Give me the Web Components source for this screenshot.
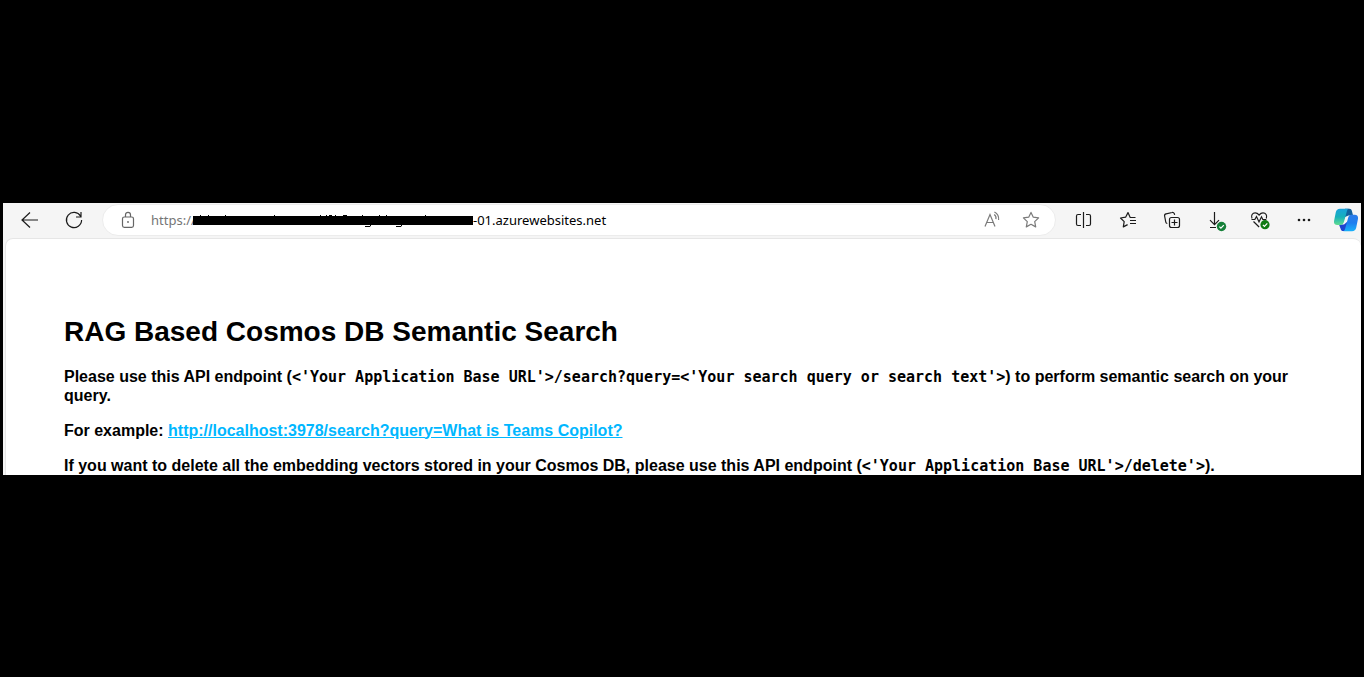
<!DOCTYPE html>
<html lang="en">
<head>
<meta charset="utf-8">
<meta name="viewport" content="width=device-width, initial-scale=1">
<title>RAG Based Cosmos DB Semantic Search</title>
<style>
  body { margin: 0; background: #000; }
</style>
</head>
<body>
<browser-window>
  <browser-toolbar slot="toolbar"></browser-toolbar>
  <search-page></search-page>
</browser-window>

<script>
const icons = {
  back: '<path d="M20 12H4M12 4.5L4 12l8 7.5"/>',
  reload: '<path d="M18.6 8.2A7.6 7.6 0 1 0 19.6 12M19 4v5h-5"/>',
  lock: '<rect x="6.5" y="9" width="11" height="10.3" rx="1.8"/><path d="M9.5 9V6.8a2.5 2.5 0 0 1 5 0V9"/><circle cx="12" cy="14" r=".9" fill="currentColor" stroke="none"/>',
  read: '<path d="M6 18.5L11 6.6l5 11.9M7.6 14.5h6.8M15.2 6.6a4.5 4.5 0 0 1 1.7 4.6M15.400 4a8 8 0 0 1 4.200 8"/>',
  star: '<path d="M12 4.4l2.3 4.8 5.3.7-3.9 3.7 1 5.3-4.7-2.6-4.7 2.6 1-5.3-3.9-3.7 5.3-.7z" stroke-linejoin="round"/>',
  split: '<path d="M11.5 4v16M9 6.5H6A1.5 1.5 0 0 0 4.5 8v8A1.5 1.5 0 0 0 6 17.5h3M14 6.5h3A1.5 1.5 0 0 1 18.5 8v8a1.5 1.5 0 0 1-1.5 1.5h-3"/>',
  favorites: '<path d="M19.5 9.5H14.2L12 4.6 9.6 9.2l-5.100.8 3.700 3.700-.9 5.200 4.300-2.300M14 12.500h6M14 15.500h6" stroke-linejoin="round"/>',
  collections: '<rect x="9.5" y="9.5" width="10" height="10" rx="2"/><path d="M14.5 11.5v6M11.5 14.5h6M7.3 15.5a1.9 1.9 0 0 1-1.5-1.400L4.600 8a1.900 1.900 0 0 1 1.500-2.200l6-1.300a1.900 1.900 0 0 1 2.300 1.400l.2 1"/>',
  download: '<path d="M10.500 4v12.500M6 12.200l4.500 4.500 4.500-4.500M6 19.500h6"/><circle cx="17.500" cy="18.500" r="4.700" fill="#158039" stroke="none"/><path d="M15.400 18.600l1.500 1.500 2.900-3" stroke="#fff"/>',
  health: '<path d="M4 10.500C2.700 7.500 4.500 4.800 7.200 4.800c1.800 0 2.900 1 3.900 2.200 1-1.200 2.100-2.200 3.900-2.200 2.700 0 4.500 2.700 3.300 5.700M3.500 11.500h3.300l1.700-2.900 2.500 5.300 2.500-5.100 1.300 2.700h3.500M5.500 13.500l5.600 5.500"/><circle cx="17" cy="16.700" r="4.600" fill="#0f7b12" stroke="none"/><path d="M14.900 16.800l1.500 1.500 2.900-3" stroke="#fff"/>',
  more: '<g fill="currentColor" stroke="none"><circle cx="7" cy="12" r="1.300"/><circle cx="12" cy="12" r="1.300"/><circle cx="17" cy="12" r="1.300"/></g>',
  copilot: `<defs>
      <linearGradient id="a" x1="0" y1="0" x2="0" y2="1"><stop offset="0" stop-color="#19a2dc"/><stop offset=".5" stop-color="#17b0ba"/><stop offset="1" stop-color="#61dc8f"/></linearGradient>
      <linearGradient id="b" x1="0" y1="0" x2="0" y2="1"><stop offset="0" stop-color="#2b7be9"/><stop offset=".5" stop-color="#1c7eef"/><stop offset="1" stop-color="#18b2fa"/></linearGradient>
    </defs>
    <g stroke="none">
      <path fill="#12609d" d="M11 .8h4.300c1.500 0 2.200.8 2.600 2.200l1.200 4.500h-4.600L11 9z"/>
      <path fill="#1d45d0" d="M5 16.500h5l3.500-3 .3 5.500-2.300 4H9.200c-1.500 0-2.200-.9-2.600-2.300z"/>
      <path fill="url(#a)" d="M6 .800h9c-1.300 0-1.800 1.300-2.200 2.700L10 13.800c-.5 1.900-1.700 3.200-3.500 3.200H3.200C.300 17-.500 14.800.200 12.300L1.800 4.300C2.300 2 3.700.800 6 .800z"/>
      <path fill="url(#b)" d="M18 23.200H9c1.300 0 1.800-1.300 2.200-2.700L14 10.200c.5-1.900 1.700-3.400 3.500-3.400h3.300c2.900 0 3.700 2.400 3 4.900l-1.600 8c-.5 2.300-1.900 3.500-4.200 3.500z"/>
    </g>`
};

class TbIcon extends HTMLElement {
  connectedCallback() {
    this.attachShadow({ mode: 'open' }).innerHTML = `
      <style>
        :host { display: block; width: 24px; height: 24px; flex: none; }
        svg { display: block; width: 100%; height: 100%; }
      </style>
      <svg viewBox="0 0 24 24" fill="none" stroke="currentColor" stroke-width="1.200" aria-hidden="true">${icons[this.getAttribute('name')]}</svg>`;
  }
}
customElements.define('tb-icon', TbIcon);

class TbButton extends HTMLElement {
  connectedCallback() {
    this.attachShadow({ mode: 'open' }).innerHTML = `
      <style>
        :host { display: block; flex: none; width: 44px; color: #1b1b1b; }
        :host([muted]) { width: 40px; color: #7a7a7a; }
        :host([edge]) { width: 35px; }
        button { display: flex; align-items: center; justify-content: center; width: 100%; padding: 0; border: 0; background: none; color: inherit; }
        :host([edge]) button { justify-content: flex-end; padding-right: 3px; }
      </style>
      <button type="button" aria-label="${this.getAttribute('label')}"><tb-icon name="${this.getAttribute('icon')}"></tb-icon></button>`;
  }
}
customElements.define('tb-button', TbButton);

class AddressBar extends HTMLElement {
  connectedCallback() {
    this.attachShadow({ mode: 'open' }).innerHTML = `
      <style>
        :host { display: flex; align-items: center; box-sizing: border-box; height: 32px; padding: 0 4px 0 13px;
          background: #fff; border: 1px solid #ececec; border-radius: 16px; font: 13px/20px "Noto Sans", sans-serif; }
        tb-icon { color: #666; margin-right: 11px; }
        label { flex: none; width: 42px; color: #757575; }
        svg { display: block; flex: none; width: 280px; height: 16px; }
        input { flex: 1; min-width: 0; height: 20px; padding: 0; border: 0; outline: 0; background: none; font: inherit; color: #000; }
      </style>
      <tb-icon name="lock"></tb-icon>
      <label for="url">https://</label>
      <svg viewBox="0 0 280 16" aria-hidden="true">
        <path d="M0 4h280v9H0z"/>
        <path stroke="#000" fill="none" d="M7.500 3v1M15.500 3v1M32.500 3v1M81.500 3v1M127.500 3v1M133.500 3v1M136 3.500h3M142.500 3v1M150 3.500h4M169.500 3v1M186.500 3v1M193.500 3v1M232.500 3v1M172 14.500h5l1-2M203 14.500h5l1-2"/>
      </svg>
      <input id="url" type="text" value="-01.azurewebsites.net" spellcheck="false">
      <tb-button muted icon="read" label="Read aloud"></tb-button>
      <tb-button muted icon="star" label="Add to favorites"></tb-button>`;
  }
}
customElements.define('address-bar', AddressBar);

class BrowserToolbar extends HTMLElement {
  connectedCallback() {
    this.attachShadow({ mode: 'open' }).innerHTML = `
      <style>
        :host { display: flex; align-items: center; height: 34px; padding: 0 0 1px 5px; }
        address-bar { flex: 1; min-width: 0; margin: 0 6px; }
      </style>
      <tb-button icon="back" label="Back"></tb-button>
      <tb-button icon="reload" label="Refresh"></tb-button>
      <address-bar></address-bar>
      <tb-button icon="split" label="Split screen"></tb-button>
      <tb-button icon="favorites" label="Favorites"></tb-button>
      <tb-button icon="collections" label="Collections"></tb-button>
      <tb-button icon="download" label="Downloads"></tb-button>
      <tb-button icon="health" label="Browser essentials"></tb-button>
      <tb-button icon="more" label="Settings and more"></tb-button>
      <tb-button edge icon="copilot" label="Copilot"></tb-button>`;
  }
}
customElements.define('browser-toolbar', BrowserToolbar);

class SearchPage extends HTMLElement {
  connectedCallback() {
    this.attachShadow({ mode: 'open' }).innerHTML = `
      <style>
        :host { display: block; padding: 77px 58px 0; color: #000; font: bold 16px/19px "Liberation Sans", Arial, sans-serif; }
        h1 { margin: 0 0 19px; font-size: 28px; line-height: 32px; }
        p { margin: 0 0 16px; }
        p:last-child { margin: 0; }
        code { font: bold 15px/15px "DejaVu Sans Mono", monospace; }
        a { color: #00b7ff; }
      </style>
      <h1>RAG Based Cosmos DB Semantic Search</h1>
      <p>Please use this API endpoint (<code>&lt;'Your Application Base URL'&gt;/search?query=&lt;'Your search query or search text'&gt;</code>) to perform semantic search on your query.</p>
      <p>For example: <a href="http://localhost:3978/search?query=What is Teams Copilot?">http://localhost:3978/search?query=What is Teams Copilot?</a></p>
      <p>If you want to delete all the embedding vectors stored in your Cosmos DB, please use this API endpoint (<code>&lt;'Your Application Base URL'&gt;/delete'&gt;</code>).</p>`;
  }
}
customElements.define('search-page', SearchPage);

class BrowserWindow extends HTMLElement {
  connectedCallback() {
    this.attachShadow({ mode: 'open' }).innerHTML = `
      <style>
        :host { display: flex; flex-direction: column; justify-content: center; box-sizing: border-box; min-height: 100vh; padding: 0 3px; background: #000; }
        section { background: #f5f5f5; overflow: hidden; }
        main { margin-left: 2px; background: #fff; border: 1px solid #e6e6e6; border-width: 1px 0 0 1px; border-radius: 8px 8px 0 0; }
      </style>
      <section>
        <slot name="toolbar"></slot>
        <main><slot></slot></main>
      </section>`;
  }
}
customElements.define('browser-window', BrowserWindow);
</script>
</body>
</html>
